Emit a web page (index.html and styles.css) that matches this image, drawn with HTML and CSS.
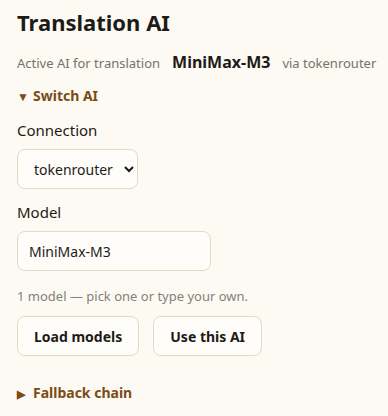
FILE: index.html
```html
<!DOCTYPE html>
<html lang="en">
<head>
    <title>Translation AI</title>
    <link rel="stylesheet" href="styles.css">
</head>
<body>
    <div class="panel">
        <h1 class="title">Translation AI</h1>
        <p class="active">
            <span class="muted">Active AI for translation</span>
            <b class="model-name">MiniMax-M3</b>
            <span class="muted">via tokenrouter</span>
        </p>

        <details class="switch" open>
            <summary>Switch AI</summary>
            <label class="field-label" for="conn">Connection</label>
            <select id="conn" class="control select">
                <option>tokenrouter</option>
            </select>
            <label class="field-label" for="model">Model</label>
            <input id="model" class="control input" type="text" value="MiniMax-M3">
            <p class="hint">1 model — pick one or type your own.</p>
            <div class="actions">
                <button class="btn">Load models</button>
                <button class="btn">Use this AI</button>
            </div>
        </details>

        <details class="switch fallback">
            <summary>Fallback chain</summary>
        </details>
    </div>
</body>
</html>
```

FILE: styles.css
```css
body {
    margin: 0;
    background: #fdf9f3;
    font-family: "Noto Sans", "Open Sans", sans-serif;
    color: #1d1b18;
}
.panel {
    padding: 6px 17px;
}
.title {
    font-size: 22px;
    font-weight: 700;
    margin: 0 0 13px;
    line-height: 32px;
}
.active {
    margin: 0;
    display: flex;
    align-items: baseline;
    gap: 12px;
    white-space: nowrap;
}
.muted {
    font-size: 13px;
    color: #77716a;
}
.model-name {
    font-size: 16px;
    font-weight: 700;
}
.switch summary {
    list-style: none;
    cursor: pointer;
    color: #7a4c17;
    font-weight: 700;
    font-size: 14px;
    margin-top: 13px;
}
.switch summary::-webkit-details-marker {
    display: none;
}
.switch summary::before {
    content: "\25B6";
    font-size: 11px;
    display: inline-block;
    width: 16px;
}
.switch[open] summary::before {
    content: "\25BC";
    font-size: 12px;
}
.field-label {
    display: block;
    font-size: 15px;
    margin: 13px 0 9px;
}
.switch summary + .field-label {
    margin-top: 15px;
}
.control {
    display: block;
    box-sizing: border-box;
    height: 40px;
    border: 1px solid #e4d9c7;
    border-radius: 8px;
    background: #fffdf9;
    font-family: inherit;
    font-size: 14px;
    color: #1d1b18;
}
.select {
    width: 121px;
    padding: 0 6px 0 12px;
}
.input {
    width: 194px;
    padding: 0 11px;
}
.hint {
    font-size: 13px;
    color: #85807a;
    margin: 16px 0 11px;
}
.actions {
    display: flex;
    gap: 14px;
}
.btn {
    height: 40px;
    padding: 0 16px;
    border: 1px solid #e4d9c7;
    border-radius: 8px;
    background: #fffdf9;
    font-family: inherit;
    font-weight: 700;
    font-size: 14px;
    color: #1d1b18;
}
.fallback summary {
    margin-top: 27px;
}
```
